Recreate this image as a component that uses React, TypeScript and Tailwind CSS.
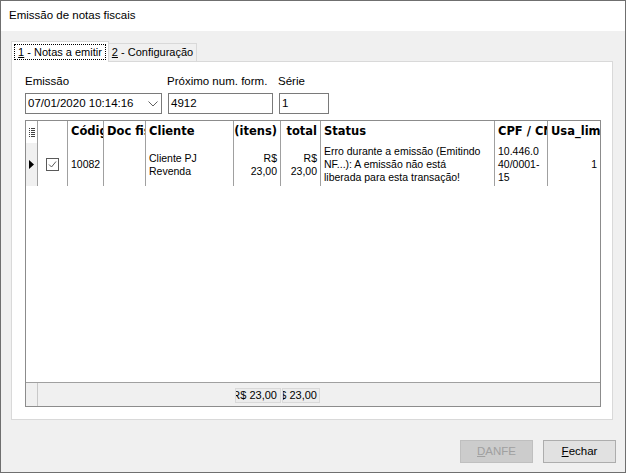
import React from 'react';

// Pequeno ícone do indicador no cabeçalho da grade
function IndicatorIcon() {
  return (
    <svg width="6" height="9" viewBox="0 0 6 9" className="block">
      {[0, 2, 4, 6, 8].map((y) => (
        <g key={y} fill="#404040">
          <rect x="0" y={y} width="1" height="1" />
          <rect x="2" y={y} width="4" height="1" />
        </g>
      ))}
    </svg>
  );
}

function CheckBox() {
  return (
    <svg width="13" height="13" viewBox="0 0 13 13" className="block">
      <rect x="0.5" y="0.5" width="12" height="12" fill="white" stroke="#5a5a5a" />
      <polyline points="3,6.5 5.5,9 10,3.5" fill="none" stroke="#5a5a5a" strokeWidth="1" />
    </svg>
  );
}

const headCell = 'h-full flex items-center px-[3px] border-r border-[#a0a0a0] overflow-hidden whitespace-nowrap';
const dataCell = 'h-full flex items-center px-[3px] border-r border-[#a0a0a0] overflow-hidden';

export default function App() {
  return (
    <div className="w-[626px] h-[473px] border border-[#6f6f6f] flex flex-col bg-[#f0f0f0] font-['Liberation_Sans',Arial,sans-serif] text-[11.5px] text-black overflow-hidden">
      {/* Barra de título */}
      <div className="h-[30px] shrink-0 bg-white flex items-center pl-[8px]">Emissão de notas fiscais</div>

      <div className="flex-1 flex flex-col pl-[10px] pt-[10px]">
        {/* Abas */}
        <div className="flex items-end h-[20px] relative z-10 whitespace-nowrap text-[11px]">
          <div className="w-[98px] h-[21px] -mb-px bg-white border border-b-0 border-[#d9d9d9] flex items-center justify-center">
            <span className="border border-dotted border-black px-[3px] leading-[14px]">
              <span className="underline">1</span> - Notas a emitir
            </span>
          </div>
          <div className="w-[88px] h-[18px] bg-[#f0f0f0] border border-b-0 border-l-0 border-[#d9d9d9] flex items-center justify-center">
            <span>
              <span className="underline">2</span> - Configuração
            </span>
          </div>
        </div>

        {/* Painel da aba */}
        <div className="w-[602px] h-[359px] bg-white border border-[#d9d9d9] pl-[13px] pt-[11px] flex flex-col">
          <div className="flex gap-[6px] whitespace-nowrap">
            <div className="w-[137px] flex flex-col">
              <div className="leading-[16px] mb-[4px]">Emissão</div>
              <div className="h-[21px] border border-[#7a7a7a] flex items-center pl-[2px] pr-[3px]">
                <span className="flex-1">07/01/2020 10:14:16</span>
                <svg width="10" height="6" viewBox="0 0 10 6" className="block">
                  <polyline points="0.5,0.5 5,5 9.5,0.5" fill="none" stroke="#606060" strokeWidth="1" />
                </svg>
              </div>
            </div>
            <div className="w-[105px] flex flex-col">
              <div className="leading-[16px] mb-[4px] -ml-px">Próximo num. form.</div>
              <div className="h-[21px] border border-[#7a7a7a] flex items-center pl-[2px]">4912</div>
            </div>
            <div className="w-[50px] flex flex-col">
              <div className="leading-[16px] mb-[4px] -ml-px">Série</div>
              <div className="h-[21px] border border-[#7a7a7a] flex items-center pl-[2px]">1</div>
            </div>
          </div>

          {/* Grade */}
          <div className="mt-[6px] w-[576px] h-[287px] border border-[#8c8c8c] flex flex-col font-['Liberation_Sans',Arial,sans-serif] text-[10.5px]">
            <div className="h-[22px] flex font-['DejaVu_Sans',sans-serif] font-bold text-[11.5px]">
              <div className="w-[12px] h-full flex items-center justify-center border-r border-[#a0a0a0]">
                <IndicatorIcon />
              </div>
              <div className={`w-[30px] ${headCell}`} />
              <div className={`w-[36px] ${headCell}`}>Código</div>
              <div className={`w-[42px] ${headCell}`}>Doc fiscal</div>
              <div className={`w-[88px] ${headCell}`}>Cliente</div>
              <div className={`w-[47px] ${headCell} justify-end`}>Qtd (itens)</div>
              <div className={`w-[40px] ${headCell} justify-end`}>total</div>
              <div className={`w-[174px] ${headCell}`}>Status</div>
              <div className={`w-[53px] ${headCell}`}>CPF / CNPJ</div>
              <div className="w-[52px] h-full flex items-center px-[3px] overflow-hidden whitespace-nowrap">Usa_limite</div>
            </div>

            <div className="h-[43px] flex leading-[13px]">
              <div className="w-[12px] h-full bg-[#f0f0f0] flex items-center justify-center border-r border-[#a0a0a0]">
                <svg width="5" height="9" viewBox="0 0 5 9" className="block">
                  <polygon points="0,0 5,4.5 0,9" fill="black" />
                </svg>
              </div>
              <div className={`w-[30px] ${dataCell} justify-center`}>
                <CheckBox />
              </div>
              <div className={`w-[36px] ${dataCell}`}>10082</div>
              <div className={`w-[42px] ${dataCell}`} />
              <div className={`w-[88px] ${dataCell}`}>
                <div>
                  Cliente PJ
                  <br />
                  Revenda
                </div>
              </div>
              <div className={`w-[47px] ${dataCell} justify-end text-right`}>
                <div>
                  R$
                  <br />
                  23,00
                </div>
              </div>
              <div className={`w-[40px] ${dataCell} justify-end text-right`}>
                <div>
                  R$
                  <br />
                  23,00
                </div>
              </div>
              <div className={`w-[174px] ${dataCell} whitespace-nowrap`}>
                <div>
                  Erro durante a emissão (Emitindo
                  <br />
                  NF...): A emissão não está
                  <br />
                  liberada para esta transação!
                </div>
              </div>
              <div className={`w-[53px] ${dataCell} whitespace-nowrap`}>
                <div>
                  10.446.0
                  <br />
                  40/0001-
                  <br />
                  15
                </div>
              </div>
              <div className="w-[52px] h-full flex items-center justify-end px-[3px]">1</div>
            </div>

            <div className="flex-1 bg-white" />

            {/* Rodapé de totais */}
            <div className="h-[24px] border-t border-[#a0a0a0] bg-[#f0f0f0] flex text-[11px]">
              <div className="w-[12px] h-full border-r border-[#c8c8c8]" />
              <div className="w-[197px]" />
              <div className="mt-[5px] w-[46px] h-[15px] border border-[#d9d9d9] bg-[#ececec] flex items-center justify-end pr-[3px] overflow-hidden whitespace-nowrap">
                R$ 23,00
              </div>
              <div className="mt-[5px] ml-[1px] w-[38px] h-[15px] border border-[#d9d9d9] bg-[#ececec] flex items-center justify-end pr-[2px] overflow-hidden whitespace-nowrap">
                R$ 23,00
              </div>
            </div>
          </div>
        </div>

        {/* Botões */}
        <div className="flex justify-end gap-[10px] pr-[9px] mt-[20px]">
          <button className="w-[73px] h-[23px] bg-[#cccccc] border border-[#bfbfbf] text-[#a0a0a0]">
            <span className="underline">D</span>ANFE
          </button>
          <button className="w-[73px] h-[23px] bg-[#e1e1e1] border border-[#adadad]">
            <span className="underline">F</span>echar
          </button>
        </div>
      </div>
    </div>
  );
}
